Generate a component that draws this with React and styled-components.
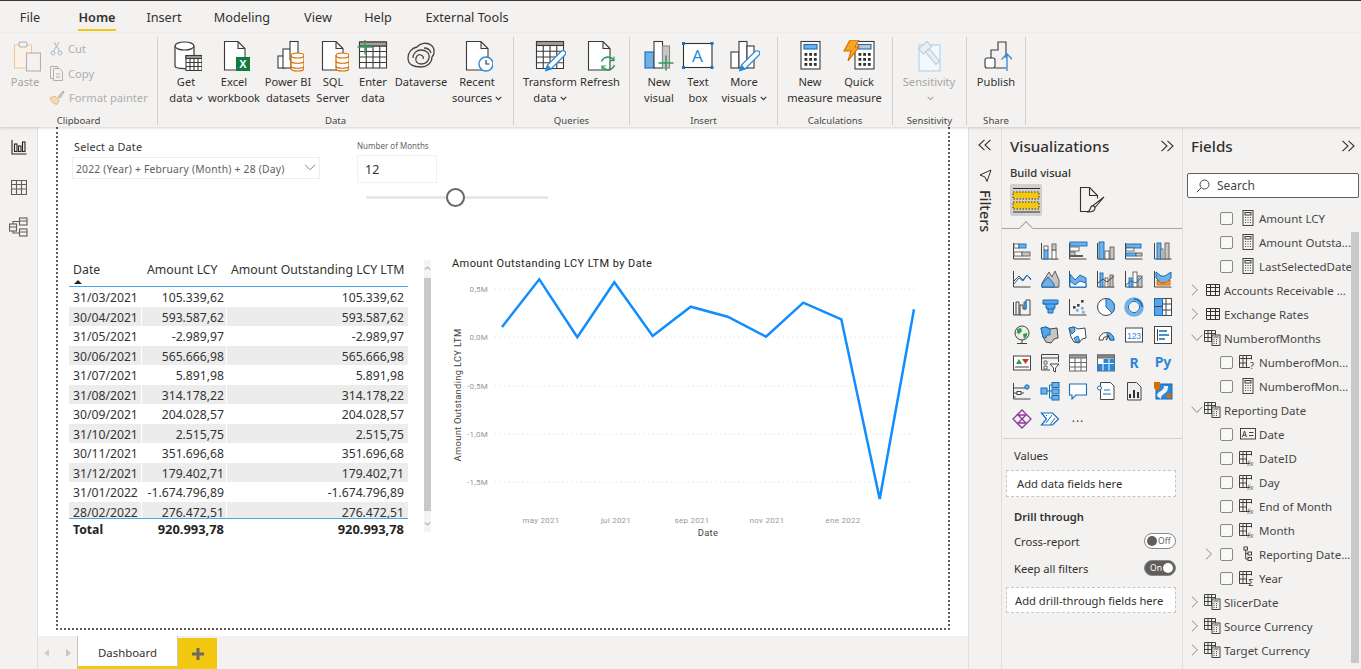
import React from 'react';
import styled, { createGlobalStyle } from 'styled-components';

const D = '#3b3a39', BF = '#71afe5', BS = '#106ebe', OR = '#d86c00', GR = '#2f9e44';
const UI = '"Noto Sans", "Open Sans", sans-serif';

const Global = createGlobalStyle`
  html, body { margin: 0; padding: 0; height: 100%; overflow: hidden; background: #f3f2f1; }
  body { font-family: ${UI}; color: #252423; }
  * { box-sizing: border-box; }
`;

const Window = styled.div`
  width: 1361px; height: 669px; display: flex; flex-direction: column;
  border-top: 1px solid #3a3a3a; background: #f3f2f1;
`;
const TabStrip = styled.nav`
  height: 32px; display: flex; align-items: flex-start; flex: none;
`;
const TopTab = styled.div`
  position: relative; flex: none; width: ${p => p.$w}px; margin-left: ${p => p.$m}px;
  height: 30px; line-height: 33px; font-size: 12.7px; white-space: nowrap; display: flex; justify-content: center;
  font-weight: ${p => (p.$active ? 600 : 400)}; color: #323130;
  border-bottom: ${p => (p.$active ? '2px solid #f2c811' : '2px solid transparent')};
`;
const Ribbon = styled.header`
  height: 94px; flex: none; display: flex; padding: 4px 0 2px; position: relative; z-index: 2;
  box-shadow: 0 1px 3px rgba(0,0,0,.18);
`;
const Group = styled.section`
  width: ${p => p.$w}px; flex: none; display: flex; flex-direction: column;
  border-right: 1px solid #d2d0ce;
`;
const GroupBody = styled.div`
  flex: 1; display: flex; padding: 3px 0 0 ${p => p.$pad ?? 8}px; min-height: 0;
`;
const GroupLabel = styled.div`
  height: 15px; line-height: 15px; text-align: center; font-size: 9.6px; color: #484644; flex: none;
  margin-bottom: -3px;
`;
const BigButton = styled.div`
  width: ${p => p.$w}px; flex: none; display: flex; flex-direction: column; align-items: center;
  color: ${p => (p.$off ? '#a8a6a4' : '#323130')};
  svg.main { display: block; flex: none; }
`;
const BigLabel = styled.div`
  margin-top: 2px; font-size: 11.1px; line-height: 16px; text-align: center; white-space: nowrap;
`;
const Caret = styled.svg`
  margin-left: 3px; vertical-align: 1px;
`;
const SmallStack = styled.div`
  margin-left: 7px; display: flex; flex-direction: column; gap: 7px;
`;
const SmallButton = styled.div`
  height: 17.5px; display: flex; align-items: center; gap: 4px; color: #b0aeac; font-size: 11.2px; white-space: nowrap;
`;

const Main = styled.main`
  flex: 1; display: flex; min-height: 0;
`;
const LeftRail = styled.aside`
  width: 38px; flex: none; border-right: 1px solid #e1dfdd; display: flex; flex-direction: column;
`;
const RailItem = styled.div`
  height: 40px; display: flex; align-items: center; justify-content: center;
`;
const CanvasColumn = styled.div`
  width: 930px; flex: none; display: flex; flex-direction: column;
`;
const Canvas = styled.div`
  flex: 1; background: #fff; padding: 0 18px 6px; min-height: 0; display: flex;
`;
const ReportPage = styled.div`
  flex: 1; border: 2px dotted #605e5c; border-top: 0; padding: 12px 0 0 11px; min-width: 0;
`;
const SlicerRow = styled.div`
  display: flex; height: 116px; padding-left: 3px; align-items: flex-start;
`;
const DateSlicer = styled.div`
  width: 248px; flex: none;
`;
const SlicerTitle = styled.div`
  font-size: 10.8px; line-height: 16px; padding-left: 2px; color: #333; letter-spacing: .2px;
`;
const DateBox = styled.div`
  margin-top: 2px; height: 22px; border: 1px solid #eee; padding: 0 3px 2px 3px; display: flex; align-items: center;
  justify-content: space-between; font-size: 10.3px; letter-spacing: .22px; color: #605e5c; white-space: nowrap;
`;
const DateText = styled.span`
  position: relative; top: 2px;
`;
const NumberSlicer = styled.div`
  margin-left: 37px; width: 192px; flex: none;
`;
const NumberTitle = styled.div`
  font-size: 8px; line-height: 12px; margin-top: 1px; color: #666;
`;
const NumberBox = styled.div`
  margin-top: 3px; width: 80px; height: 28px; border: 1px solid #f0f0f0; padding-left: 7px;
  font-size: 12.5px; line-height: 28px; color: #333;
`;
const Track = styled.div`
  position: relative; margin: 13px 0 0 9px; width: 182px; height: 3px; background: #e8e8e8;
`;
const Thumb = styled.div`
  position: absolute; left: 80px; top: -8px; width: 19px; height: 19px; border-radius: 50%;
  border: 2px solid #666; background: #fff;
`;
const VisualRow = styled.div`
  display: flex; align-items: flex-start;
`;
const Table = styled.div`
  width: 339px; margin-top: 6px; flex: none; font-size: 12.2px; color: #333;
`;
const HeaderRow = styled.div`
  display: grid; grid-template-columns: 73px 85px 181px; height: 26px; border-bottom: 1px solid #4aa6e8;
  font-size: 12.3px; line-height: 16px; padding-top: 1px; color: #333;
`;
const HeadCell = styled.div`
  padding-left: ${p => p.$pad}px; white-space: nowrap;
`;
const SortMark = styled.div`
  width: 0; height: 0; margin: 2px 0 0 1px; border: 4px solid transparent; border-top: 0;
  border-bottom: 4px solid #252423;
`;
const RowsClip = styled.div`
  height: 231px; overflow: hidden;
`;
const Row = styled.div`
  display: grid; grid-template-columns: 72px 1px 84px 1px 181px; height: 19.5px; line-height: 21px;
  ${p => p.$alt && 'background: #ececec;'}
`;
const Cell = styled.div`
  text-align: ${p => (p.$left ? 'left' : 'right')}; padding: 0 ${p => (p.$left ? 0 : (p.$pr ?? 3))}px 0 ${p => (p.$left ? 4 : 0)}px;
  white-space: nowrap; grid-column: ${p => p.$col};
`;
const TotalValue = styled(Cell)`
  font-size: 12.9px;
`;
const ColGap = styled.div`
  background: #fff; grid-column: ${p => p.$col}; grid-row: 1;
`;
const TotalRow = styled.div`
  display: grid; grid-template-columns: 73px 85px 181px; height: 21px; border-top: 1px solid #4aa6e8;
  line-height: 21px; font-weight: 700; color: #252423; font-size: 12.2px;
`;
const TableScroll = styled.div`
  margin: 5px 0 0 16px; width: 7px; height: 272px; background: #f3f3f3; flex: none; display: flex;
  flex-direction: column; align-items: center; justify-content: space-between; padding: 6px 0 6px; position: relative;
`;
const ScrollThumb = styled.div`
  position: absolute; left: 0; right: 0; top: 18px; height: 233px; background: #c8c8c8;
`;
const Chart = styled.svg`
  display: block; margin-left: 9px; flex: none;
`;
const ChartTitle = styled.text`
  font-family: Roboto, sans-serif; font-size: 11px; fill: #252423; letter-spacing: .42px;
`;
const Tick = styled.text`
  font-family: Roboto, sans-serif; font-size: 8px; fill: #999; letter-spacing: .25px;
`;
const AxisTitle = styled.text`
  font-family: Roboto, sans-serif; font-size: 9.4px; fill: #444; letter-spacing: .3px;
`;
const SheetBar = styled.footer`
  height: 33px; flex: none; display: flex; align-items: flex-end; background: #f3f2f1;
`;
const SheetArrows = styled.div`
  width: 39px; height: 33px; flex: none; display: flex; align-items: center; gap: 17px; padding: 1px 0 0 6px;
`;
const SheetTab = styled.div`
  width: 101px; height: 33px; background: #fff; border-left: 1px solid #c8c6c4; border-right: 1px solid #c8c6c4;
  border-bottom: 3px solid #f2c811; text-align: center; line-height: 34px; font-size: 11.4px; color: #323130; flex: none;
`;
const AddTab = styled.div`
  width: 39px; height: 31px; background: #f2c811; display: flex; align-items: center; justify-content: center; flex: none;
`;
const FilterRail = styled.aside`
  width: 34px; flex: none; border-left: 1px solid #e1dfdd; border-right: 1px solid #e1dfdd;
  display: flex; flex-direction: column; align-items: center; padding-top: 12px;
`;
const FilterGlyph = styled.div`
  margin-top: 18px; height: 13px; display: flex;
`;
const FilterWord = styled.div`
  writing-mode: vertical-rl; margin-top: 8px; font-size: 14.4px; line-height: 16px; font-weight: 500; color: #323130;
`;
const VizPane = styled.aside`
  width: 181px; flex: none; border-right: 1px solid #e1dfdd; display: flex; flex-direction: column;
`;
const PaneHead = styled.div`
  height: 38px; flex: none; display: flex; align-items: center; justify-content: space-between;
  padding: 0 ${p => p.$r}px 0 ${p => p.$l}px; font-size: 15.2px; font-weight: 500; color: #323130;
`;
const BuildLabel = styled.div`
  margin-left: 8px; height: 16px; line-height: 16px; font-size: 11.2px; font-weight: 500; color: #323130;
`;
const BuildRow = styled.div`
  position: relative; margin-top: 3px; height: 45px; border-bottom: 1px solid #a8a6a4; display: flex;
  align-items: flex-start; padding-left: 8px; flex: none;
  &::after {
    content: ''; position: absolute; left: 19px; bottom: -5px; width: 9px; height: 9px; background: #f3f2f1;
    border-left: 1px solid #a8a6a4; border-top: 1px solid #a8a6a4; transform: rotate(45deg);
  }
`;
const BuildTile = styled.div`
  width: 32px; height: 32px; background: #d2d0ce; border-radius: 2px; display: flex; align-items: center; justify-content: center;
`;
const FormatTile = styled.div`
  margin-left: 36px; width: 28px; height: 32px; display: flex; align-items: center; justify-content: center;
`;
const VizGrid = styled.div`
  margin: 8px 0 0 6px; display: grid; grid-template-columns: repeat(6, 28.1px); grid-auto-rows: 28px;
  height: 201px; flex: none;
`;
const VizCell = styled.div`
  display: flex; align-items: center; justify-content: center;
  svg { overflow: visible; }
`;
const PaneRule = styled.div`
  height: 1px; background: #d2d0ce; margin: 0 0 0 1px; flex: none;
`;
const PaneLabel = styled.div`
  margin: ${p => p.$t}px 0 0 12px; height: 16px; line-height: 16px; font-size: 11.2px; color: #323130;
  font-weight: ${p => (p.$bold ? 600 : 400)};
`;
const DropBox = styled.div`
  margin: ${p => p.$t}px 6px 0 4px; height: ${p => p.$h}px; background: #fff; border: 1px dashed #c8c6c4;
  padding-left: ${p => p.$p}px; display: flex; align-items: center; font-size: 11.2px; color: #323130; white-space: nowrap;
`;
const ToggleRow = styled.div`
  margin: ${p => p.$t}px 6px 0 12px; height: 18px; display: flex; align-items: center; justify-content: space-between;
  font-size: 11.2px; color: #323130;
`;
const Toggle = styled.div`
  width: 32px; height: 16px; border-radius: 8px; display: flex; align-items: center; gap: 1px;
  flex-direction: ${p => (p.$on ? 'row' : 'row-reverse')}; justify-content: flex-end;
  border: 1px solid #8a8886; background: ${p => (p.$on ? '#605e5c' : '#fff')};
  color: ${p => (p.$on ? '#fff' : '#605e5c')}; font-size: 8.6px; padding: 0 2px;
  &::after { content: ''; width: 10px; height: 10px; border-radius: 50%; background: ${p => (p.$on ? '#fff' : '#605e5c')}; flex: none; }
`;
const FieldsPane = styled.aside`
  flex: 1; min-width: 0; display: flex; flex-direction: column; position: relative;
`;
const SearchBox = styled.div`
  margin: 8px 2px 0 4px; height: 25px; background: #fff; border: 1px solid #605e5c; border-radius: 2px; flex: none;
  display: flex; align-items: center; padding-left: 8px; gap: 7px; font-size: 12px; color: #484644;
`;
const FieldList = styled.div`
  margin-top: 8px; display: flex; flex-direction: column;
`;
const FieldRow = styled.div`
  height: 24px; flex: none; display: flex; align-items: center; padding-left: ${p => (p.$child ? 22 : 8)}px;
  font-size: 11.5px; color: #484644; white-space: nowrap;
`;
const ChevSlot = styled.div`
  width: ${p => (p.$child ? 15 : 13)}px; flex: none; display: flex; align-items: center;
`;
const Check = styled.div`
  width: 13px; height: 13px; border: 1px solid #8a8886; border-radius: 2px; background: #f8f8f7; margin-right: 6px; flex: none;
`;
const IconSlot = styled.div`
  width: 17px; height: 16px; flex: none; margin-right: 3px; display: flex; align-items: center; justify-content: center;
`;
const FieldScroll = styled.div`
  position: absolute; left: 168px; width: 8px; top: 105px; height: 431px; background: #c8c8c8;
`;

/* ---------- ribbon drawings ---------- */
const Ic = ({ children, s = 32 }) => (
  <svg className="main" width={s} height={s} viewBox="0 0 32 32" fill="#fff" stroke={D} strokeWidth="1.1">{children}</svg>
);
const Cyl = ({ x, y, w, h, c = OR, fill = '#fff' }) => (
  <g stroke={c} fill={fill} strokeWidth="1.2">
    <path d={`M${x} ${y + 2.5}V${y + h - 2.5}c0 3.3 ${w} 3.3 ${w} 0V${y + 2.5}`} />
    <ellipse cx={x + w / 2} cy={y + 2.5} rx={w / 2} ry="2.5" />
    <path d={`M${x} ${y + h / 3 + 2}c0 3 ${w} 3 ${w} 0M${x} ${(y + h * 2 / 3) + 1}c0 3 ${w} 3 ${w} 0`} fill="none" />
  </g>
);
const Can = () => (
  <g stroke={D} fill="#fff" strokeWidth="1.2">
    <path d="M5 6V26c0 3.4 19 3.4 19 0V6" />
    <ellipse cx="14.5" cy="6" rx="9.5" ry="4" />
  </g>
);
const Doc = ({ x = 5, w = 21, y = 1, h = 29, c = D }) => (
  <path stroke={c} fill="#fff" d={`M${x + .5} ${y + .5}H${x + w - 7}L${x + w} ${y + 7.5}V${y + h}H${x + .5}ZM${x + w - 7} ${y + .5}V${y + 7.5}H${x + w}`} />
);
const GridT = ({ x, y, w, h, cols = 4, rows = 3, head }) => {
  const cw = w / cols, rh = (h - (head || 0)) / rows;
  let d = `M${x} ${y}h${w}v${h}h${-w}z`;
  for (let i = 1; i < cols; i++) d += `M${x + i * cw} ${y + (head || 0)}v${h - (head || 0)}`;
  for (let i = head ? 0 : 1; i < rows; i++) d += `M${x} ${y + (head || 0) + i * rh}h${w}`;
  return (<g><path d={d} fill="#fff" />{head ? <rect x={x} y={y} width={w} height={head} fill="#a19f9d" stroke={D} /> : null}</g>);
};
const Plus = ({ x, y, r = 7.5 }) => <path stroke="#2f9e5a" strokeWidth="1.5" fill="none" d={`M${x - r} ${y}h${r * 2}M${x} ${y - r}v${r * 2}`} />;
const Bars3 = () => (
  <g>
    <rect x="3" y="12" width="8" height="16" />
    <rect x="11" y="1.5" width="8" height="26.5" />
    <rect x="19" y="6" width="7" height="22" />
  </g>
);
const Calc = ({ x = 7, w = 19, screen = '#71afe5' }) => {
  const dots = [];
  for (let r = 0; r < 3; r++) for (let c = 0; c < 3; c++) dots.push(<rect key={`${r}${c}`} x={x + 3.5 + c * 4.7} y={13 + r * 5} width="2.8" height="2.8" fill="#323130" stroke="none" />);
  return (<g><rect x={x} y="1.5" width={w} height="27.5" /><rect x={x + 3} y="4.5" width={w - 6} height="4.5" fill={screen} stroke="#106ebe" />{dots}</g>);
};
const BluePen = () => (
  <g>
    <path d="M12 30.5l1.5-5.5L27 11.5c1-1 3-1 4 0s.8 2.5 0 3.5L17.5 28.5z" stroke="#2b88d8" strokeWidth="1.2" />
    <path d="M12 30.5l1.5-5 3.5 3.5z" fill="#2b88d8" stroke="#2b88d8" />
  </g>
);

const IGet = () => <Ic><Can /><GridT x={16} y={15.5} w={16} h={15} head={3} cols={4} rows={3} /></Ic>;
const IExcel = () => <Ic><Doc x={6} w={21} /><rect x="18" y="17" width="14" height="14" fill="#107c41" stroke="none" /><text x="25" y="28" textAnchor="middle" fontSize="11" fontWeight="700" fill="#fff" stroke="none" fontFamily="Liberation Sans">X</text></Ic>;
const IPbi = () => <Ic><rect x="6" y="16" width="7" height="12" /><rect x="11" y="9" width="8" height="19" /><rect x="18" y="1.5" width="8" height="18" /><Cyl x={19} y={13} w={13} h={18} /></Ic>;
const ISql = () => <Ic><Doc x={5} w={21} /><Cyl x={19} y={13} w={13} h={18} /></Ic>;
const IEnter = () => <Ic><GridT x={2.5} y={2} w={27} h={26} head={4} cols={4} rows={4} /><Plus x={8} y={7} /></Ic>;
const IDv = () => <Ic><g fill="none" stroke="#484644" strokeWidth="1.3"><path d="M3 18c0-6 4-10 9-11 3-4 10-5 14-2 4 3 4 9 1 12 0 6-5 10-11 10-7 0-13-2-13-9z" /><path d="M8 18c0-5 4-8 8-8 5 0 9 3 8 8-1 4-4 6-8 6s-6-3-5-6 3-4 5-3 3 2 2 4" /><path d="M19 8c3 0 6 2 7 5" /></g></Ic>;
const IRecent = () => <Ic><Doc x={5} w={22} /><circle cx="25" cy="24" r="7" stroke="#2b88d8" strokeWidth="1.4" /><path d="M25 20v4h3.5" fill="none" stroke="#323130" /></Ic>;
const ITransform = () => <Ic><GridT x={2.5} y={1.5} w={27} h={27} head={4} cols={4} rows={4} /><BluePen /></Ic>;
const IRefresh = () => <Ic><Doc x={4} w={22} /><g fill="none" stroke="#2f9e5a" strokeWidth="1.6"><path d="M17.5 21.5a7 7 0 0 1 12.5-1" /><path d="M30.5 25a7 7 0 0 1-12.5 1.5" /><path d="M30 16.5v4.2h-4.2M18 30v-4h4" strokeWidth="1.2" /></g></Ic>;
const INewVisual = () => <Ic><rect x="2" y="12" width="9" height="16" fill={BF} stroke={BS} /><rect x="11" y="1.5" width="8.5" height="26.5" /><rect x="19.5" y="6" width="7" height="22" fill="#c8c6c4" stroke="#8a8886" /><Plus x={23} y={23} /></Ic>;
const ITextBox = () => <Ic><rect x="1.5" y="3.5" width="28.5" height="24" stroke="#323130" /><text x="15.5" y="22" textAnchor="middle" fontSize="17" fontFamily="Noto Sans" fill="#2b88d8" stroke="none">A</text>{[[1.5, 3.5], [30, 3.5], [1.5, 27.5], [30, 27.5]].map(([a, b]) => <rect key={`${a}${b}`} x={a - 1.5} y={b - 1.5} width="3" height="3" fill="#0f78d4" stroke="none" />)}</Ic>;
const IMore = () => <Ic><Bars3 /><BluePen /></Ic>;
const IMeasure = () => <Ic><Calc /></Ic>;
const IQuick = () => <Ic><Calc x={12} w={19} screen="#c8c6c4" /><path d="M7 0h9l-4 7h4L5 21l3-10H1z" fill="#f7a51d" stroke={OR} /></Ic>;
const ISens = () => <Ic><g stroke="#a9d3ee"><rect x="6" y="5" width="21" height="26" fill="#f3f8fb" /></g><g transform="rotate(-40 18 14)" stroke="#b7cfe0" fill="#e8eef2"><rect x="12" y="2" width="11" height="7" /><rect x="15" y="9" width="5" height="16" /></g></Ic>;
const IPublish = () => <Ic><rect x="5" y="18" width="10" height="10" rx="2" /><path d="M11 18v-8h7V2h8v16M15 28h11" fill="none" /><path d="M27 31V14M21.5 19.5L27 14l5.5 5.5" fill="none" stroke="#2b88d8" strokeWidth="1.3" /></Ic>;
const IPaste = () => <Ic><rect x="5.5" y="5" width="17" height="23" fill="#fbf3ea" stroke="#f0c8a0" /><rect x="10" y="2" width="8" height="5" rx="1.5" fill="#f3f2f1" stroke="#b3b0ad" /><rect x="17.5" y="13" width="14" height="18" fill="#f3f2f1" stroke="#b3b0ad" /></Ic>;

const SCut = () => <svg width="15" height="15" viewBox="0 0 15 15" fill="none" stroke="#9db9d2"><circle cx="4" cy="12" r="2" /><circle cx="11" cy="12" r="2" /><path d="M4.5 10L10 1M10.5 10L5 1" stroke="#b3b0ad" /></svg>;
const SCopy = () => <svg width="15" height="16" viewBox="0 0 15 16" fill="#f3f2f1" stroke="#b3b0ad"><path d="M1.5 1.5h7v12h-7z" /><path d="M4.5 3.5h6l3 3v9h-9z" /><path d="M7 9h4M7 12h4" /></svg>;
const SBrush = () => <svg width="16" height="15" viewBox="0 0 16 15" fill="#f7d7b5" stroke="#eab98a"><path d="M1 8l5-2 4 4-2 4.5C5 14 2 12 1 8z" /><path d="M9 7l5-6 1 1-4 6z" fill="#d2d0ce" stroke="#b3b0ad" /></svg>;

const Down = ({ c = '#323130' }) => <Caret width="7" height="5" viewBox="0 0 7 5" fill="none" stroke={c} strokeWidth="1.1"><path d="M.7.8l2.8 2.8L6.3.8" /></Caret>;

/* ---------- rail and pane drawings ---------- */
const RailReport = () => <svg width="16" height="16" viewBox="0 0 16 16" fill="none" stroke="#252423" strokeWidth="1.1"><path d="M1 1v14h14.5" /><rect x="3.5" y="5" width="2.5" height="7.5" /><rect x="7.5" y="7" width="2.5" height="5.5" /><rect x="11.5" y="3" width="2.5" height="9.5" /></svg>;
const RailData = () => <svg width="16" height="16" viewBox="0 0 16 16" fill="none" stroke="#605e5c" strokeWidth="1.1"><path d="M.5 1.5h15v14H.5zM.5 5.5h15M.5 10h15M5.5 1.5v14M10.5 1.5v14" /></svg>;
const RailModel = () => <svg width="19" height="20" viewBox="0 0 19 20" fill="none" stroke="#605e5c" strokeWidth="1.1"><rect x=".5" y="7" width="7" height="7" /><rect x="10.5" y="1" width="7.5" height="7" /><rect x="10.5" y="12" width="7.5" height="7" /><path d="M.5 10h7M10.5 4h7.5M10.5 15h7.5M4 7V4.5h6.5M4 14v2h6.5" /></svg>;
const Dbl = ({ left }) => <svg width="14" height="12" viewBox="0 0 14 12" fill="none" stroke="#323130" strokeWidth="1.1"><path d={left ? 'M6.5 .8L1 6l5.5 5.2M12.5 .8L7 6l5.5 5.2' : 'M1.5 .8L7 6l-5.5 5.2M7.5 .8L13 6l-5.5 5.2'} /></svg>;
const FilterSend = () => <svg width="13" height="13" viewBox="0 0 13 13" fill="none" stroke="#323130"><path d="M12 1L1 6l5 2 2 4.5z" /></svg>;
const SliceIcon = () => <svg width="28" height="26" viewBox="0 0 28 26" fill="none" stroke="#323130"><path d="M1 1.5h27M1 25h27" /><rect x="1" y="5" width="26" height="7" fill="#f2c811" stroke="#323130" strokeDasharray="1.5 1.5" /><rect x="1" y="15" width="26" height="7" fill="#f2c811" stroke="#323130" strokeDasharray="1.5 1.5" /></svg>;
const FormatIcon = () => <svg width="26" height="26" viewBox="0 0 26 26" fill="none" stroke="#323130" strokeWidth="1.1"><path d="M9 24.5H1.5V.5h9l8 8v3M10.5.5v8h8" /><path d="M25 10L14 18.5l2 2z" fill="#f3f2f1" /><path d="M9 25c3 0 7-.5 7-4 0-2-3-3-4-1-1 1-.5 3-3 5z" fill="#f3f2f1" /></svg>;

const Ax = () => <path d="M1.5 2v16h17" fill="none" stroke="#444" />;
const R = ({ x, y, w, h, f = BF, s = BS }) => <rect x={x} y={y} width={w} height={h} fill={f} stroke={s} strokeWidth=".9" />;
const W = '#fff', K = '#605e5c', GF = '#c8c6c4';
const Dots = ({ pts, f }) => pts.map(([a, b]) => <rect key={`${a}-${b}`} x={a} y={b} width="2.6" height="2.6" fill={f} />);
const VIZ = [
  <><Ax /><R x={2} y={3} w={5} h={4} f={W} s={K} /><R x={7} y={3} w={7} h={4} /><R x={2} y={11} w={8} h={4} f={W} s={K} /><R x={10} y={11} w={8} h={4} f={GF} s={K} /></>,
  <><Ax /><R x={4} y={9} w={4} h={9} /><R x={4} y={5} w={4} h={4} f={W} s={K} /><R x={12} y={9} w={4} h={9} f={W} s={K} /><R x={12} y={3} w={4} h={6} f={GF} s={K} /></>,
  <><Ax /><R x={2} y={1} w={17} h={4} /><R x={2} y={6} w={9} h={4} f={W} s={K} /><R x={2} y={11} w={5} h={4} f={GF} s={K} /><path d="M2 15h13" stroke={K} strokeWidth="2" /></>,
  <><Ax /><R x={3} y={1} w={5} h={17} /><R x={9} y={10} w={4} h={8} f={W} s={K} /><R x={14} y={6} w={4} h={12} f={GF} s={K} /></>,
  <><Ax /><R x={2} y={3} w={15} h={4} /><R x={2} y={7} w={8} h={3} f={W} s={K} /><R x={2} y={12} w={10} h={3} /><R x={12} y={12} w={6} h={3} f={GF} s={K} /></>,
  <><Ax /><R x={4} y={2} w={4} h={16} /><R x={8} y={8} w={2} h={10} f={W} s={K} /><R x={12} y={2} w={4} h={16} f={GF} s={K} /></>,
  <><Ax /><path d="M2 12l5-5 4 4 4-5 4 4" fill="none" stroke="#444" /><path d="M2 15l5-6 4 3 4-6 4 5" fill="none" stroke={BS} /></>,
  <><path d="M1.5 18h17" stroke="#444" /><path d="M2 14L9 3l3 5 3-6 4 9v7H2z" fill={GF} stroke={K} /><path d="M2 18v-3l6-7 6 7v3z" fill={BF} stroke={BS} /></>,
  <><path d="M1.5 2v16h17" stroke="#444" fill="none" /><path d="M2 5l5 6 5-5 6 3v9H2z" fill={BF} stroke={BS} /><path d="M2 18v-6l5 4 5-4 6 2v4z" fill={W} stroke={BS} /></>,
  <><Ax /><R x={4} y={4} w={3} h={14} /><R x={9} y={9} w={3} h={9} f={W} s={K} /><R x={14} y={6} w={3} h={12} f={GF} s={K} /><path d="M2 14l5-4 4 3 7-6" stroke="#444" fill="none" /></>,
  <><Ax /><R x={5} y={9} w={3} h={9} /><R x={9} y={3} w={4} h={15} f={W} s={K} /><R x={14} y={7} w={4} h={11} f={GF} s={K} /><path d="M2 16l5-4 5 2 6-6" stroke={BS} fill="none" /></>,
  <><path d="M1.5 2v16h17" stroke="#444" fill="none" /><path d="M3 3l5 4 4 0 6-4v6l-5 5-5 0-5-5z" fill={BF} stroke={BS} /><path d="M4 11l4 3h4l5-3v5H4z" fill="#ed9b3c" stroke={OR} /></>,
  <><path d="M1.5 18V5M1.5 18h17" stroke="#444" /><path d="M4 18V5h3v13M8 18V8h3v4h3V3h4v15" fill="none" stroke="#444" /><path d="M12 12V5h2v7z" fill={BF} stroke={BS} /></>,
  <><path d="M3 3h15v4h-3v4h-2v5H8v-5H6V7H3z" fill="#5ba5e6" stroke={BS} /><path d="M3 7h15M6 12h9" stroke={BS} /></>,
  <><Ax /><Dots pts={[[13, 3], [5, 9], [9, 7]]} f="#444" /><Dots pts={[[8, 12], [13, 10], [14, 14]]} f={BF} /></>,
  <><circle cx="10" cy="10" r="8.5" fill={W} stroke="#444" /><path d="M10 1.5a8.5 8.5 0 0 1 6 14.5l-6-6z" fill={BF} stroke={BS} /></>,
  <><circle cx="10" cy="10" r="8" fill="none" stroke={BF} strokeWidth="3.6" /><path d="M10 2a8 8 0 0 1 8 8" fill="none" stroke={BS} strokeWidth="1.6" /><circle cx="10" cy="10" r="5.6" fill="#f3f2f1" stroke={BS} /></>,
  <><rect x="1.5" y="1.5" width="17" height="17" fill={W} stroke="#444" /><rect x="1.5" y="1.5" width="8" height="17" fill="#5ba5e6" stroke={BS} /><path d="M1.5 9.5h8M9.5 7h9M13 1.5V18.5M9.5 13h9" stroke="#444" fill="none" /></>,
  <><circle cx="10" cy="8" r="7" fill="#e8f0e8" stroke="#444" /><path d="M5 4l4-1 1 3-3 3-2-1zM11 9l4-1 0 3-3 3z" fill={GR} stroke="none" /><path d="M10 15v3M5 18.5h10" stroke="#444" /></>,
  <><path d="M1 3l5-1 4 2 7-1 1 10-4 1-3 4-5-1-3-5z" fill={GF} stroke="#444" /><path d="M1 3l5-1 4 2v6H7l-1 3-3-1z" fill="#5ba5e6" stroke={BS} /></>,
  <><path d="M1 3l5-1 4 2 7-1 1 10-4 1-3 4-5-1-3-5z" fill={W} stroke="#444" /><path d="M1 3l5-1 1 4-3 3zM6 13l4-2 2 6-4 0z" fill={BF} stroke={BS} /></>,
  <><path d="M3 15a7.5 7.5 0 0 1 15 0h-4a3.5 3.5 0 0 0-7 0z" fill={W} stroke="#444" /><path d="M11 7.5A7.5 7.5 0 0 1 18 15h-4a3.5 3.5 0 0 0-3-4z" fill={BF} stroke={BS} /><path d="M10 15l3-5" stroke="#444" strokeWidth="1.4" /></>,
  <><rect x="1.5" y="3" width="17" height="14" fill={W} stroke="#444" /><text x="10" y="13.5" textAnchor="middle" fontSize="8.5" fill="#2b88d8" stroke="none" fontFamily="Liberation Sans">123</text></>,
  <><rect x="1.5" y="1.5" width="17" height="17" fill={W} stroke="#444" /><path d="M4.5 4v12" stroke="#444" /><path d="M6 6h8M6 10h10M6 14h6" stroke={BS} strokeWidth="1.5" /></>,
  <><rect x="1.5" y="3" width="17" height="14" fill={W} stroke="#444" /><path d="M4 11l3-5 3 5z" fill={GR} /><path d="M10 6h7l-3.5 5z" fill="#d13438" /><path d="M3 14h14" stroke="#444" /></>,
  <><path d="M10 17H1.5V1.5h17V9M1.5 5h17" fill="none" stroke="#444" /><path d="M4 8h3v3H4zM4 13h3v3H4z" fill="none" stroke="#666" /><path d="M10 11h9l-3.5 4v4l-2-1v-3z" fill={W} stroke="#444" /></>,
  <><rect x="1.5" y="2" width="17" height="16" fill={W} stroke="#666" /><rect x="1.5" y="2" width="17" height="3" fill="#a19f9d" stroke="#666" /><path d="M1.5 9.5h17M1.5 14h17M7 5v13M13 5v13" stroke="#666" fill="none" /></>,
  <><rect x="1.5" y="2" width="17" height="16" fill={W} stroke="#666" /><rect x="1.5" y="2" width="17" height="3" fill="#8a8886" stroke="#666" /><path d="M7.5 6h5v4h-5zM13.5 6h5v4h-5zM1.5 11h5v7h-5zM7.5 11h5v7h-5zM13.5 11h5v7h-5z" fill="#2b88d8" /></>,
  <text x="10" y="15" textAnchor="middle" fontSize="14" fontWeight="700" fill="#2b88d8" stroke="none" fontFamily="Noto Sans">R</text>,
  <text x="10" y="14" textAnchor="middle" fontSize="14" fontWeight="700" fill="#2b88d8" stroke="none" fontFamily="Noto Sans">Py</text>,
  <><path d="M1.5 2v16h17" fill="none" stroke="#444" /><path d="M1.5 7h12M1.5 12h4M9 12h3M1.5 16h2" stroke="#444" /><circle cx="15" cy="6" r="2.2" fill={BF} stroke={BS} /><rect x="5" y="10.5" width="4" height="3" fill={W} stroke="#444" /></>,
  <><rect x="1" y="7" width="6" height="6" fill={BF} stroke={BS} /><rect x="12" y="1.5" width="7" height="5" fill={BF} stroke={BS} /><rect x="12" y="8" width="7" height="5" fill={BF} stroke={BS} /><rect x="12" y="14.5" width="7" height="4.5" fill={BF} stroke={BS} /><path d="M7 10h5M9.5 4v13M9.5 4H12M9.5 17H12" stroke={BS} fill="none" /></>,
  <path d="M1.5 3h17v11H8l-4 4v-4H1.5z" fill={W} stroke={BS} strokeWidth="1.1" />,
  <><path d="M4.5 1.5h10l3.5 3.5v13.5H4.5z" fill={W} stroke="#444" /><circle cx="3.5" cy="7" r="2" fill={W} stroke={BS} /><path d="M8 9h6M7 13h8" stroke={BS} /></>,
  <><path d="M3.5 1.5h9l4.5 4.5v13H3.5z" fill="#eee" stroke="#444" /><path d="M6 17v-4M10 17V9M14 17v-6" stroke="#323130" strokeWidth="2" /></>,
  <><rect x="3" y="3" width="16" height="15" fill="#2b88d8" stroke={BS} /><path d="M8 18c0-4 2-4 4-6 2-1 3-3 3-7h-4c0 3-2 4-3 5-2 1-4 2-4 5" fill="#f3f2f1" /><path d="M1 1h6v6l-3 3-3-3z" fill={OR} /><circle cx="16" cy="15" r="2.4" fill={OR} /></>,
  <><path d="M10 1l9 9-9 9-9-9z" fill="none" stroke="#8a3a9a" strokeWidth="1.3" /><path d="M6 6h8l-4 4zM6 14h8l-4-4z" fill="none" stroke="#8a3a9a" strokeWidth="1.3" /></>,
  <><path d="M1.5 4h11l6 6-6 6h-11l5-6z" fill={W} stroke={BS} strokeWidth="1.2" /><path d="M7 6l-1 1M12 6l-6 8M15 9l-5 7" stroke={BS} /></>,
  <text x="10" y="13" textAnchor="middle" fontSize="12" fill="#484644" stroke="none" fontFamily="Noto Sans" letterSpacing="1">...</text>,
];

const Chev = ({ open }) => <svg width={open ? 12 : 8} height={open ? 8 : 12} viewBox={open ? '0 0 12 8' : '0 0 8 12'} fill="none" stroke="#8a8886"><path d={open ? 'M.7.8L6 6.5 11.3.8' : 'M1 .8L6.5 6 1 11.2'} /></svg>;
const TblI = () => <svg width="14" height="12" viewBox="0 0 14 12" fill="none" stroke="#323130"><path d="M.5.5h13v11H.5zM.5 3.5h13M.5 7.5h13M4.5.5v11M9.5.5v11" /></svg>;
const FI = ({ children }) => <svg width="16" height="16" viewBox="0 0 16 16" fill="none" stroke="#323130" strokeWidth=".9">{children}</svg>;
const CalcTbl = () => <svg width="17" height="16" viewBox="0 0 17 16" fill="none" stroke="#323130" strokeWidth=".9"><path d="M.5.5h11v11H.5zM.5 3.5h11M4 .5v11M7.5.5v11M.5 7.5h11" /><rect x="8" y="5" width="8" height="10.5" fill="#f3f2f1" /><path d="M9.5 7h5" /><path d="M9.5 9.5h1M12 9.5h1M9.5 11.5h1M12 11.5h1M9.5 13.5h1M12 13.5h1" /></svg>;
const CalcI = () => <FI><rect x="3" y=".5" width="10" height="15" /><rect x="5" y="2.5" width="6" height="2.5" /><path d="M5 7.5h1M7.5 7.5h1M10 7.5h1M5 10h1M7.5 10h1M10 10h1M5 12.5h1M7.5 12.5h1M10 12.5h1" /></FI>;
const TblSm = ({ tag }) => <svg width="17" height="16" viewBox="0 0 17 16" fill="none" stroke="#323130" strokeWidth=".9"><path d="M11 13.5H.5v-12h12v4M.5 4.5h12M4 1.5v12M7.5 1.5v12M.5 9h7" />{tag}</svg>;
const FxT = <text x="8" y="15.5" fontSize="9" fontStyle="italic" fill="#605e5c" stroke="none" fontFamily="Liberation Serif">fx</text>;
const QT = <text x="11" y="15" fontSize="9" fill="#323130" stroke="none" fontFamily="Noto Sans">?</text>;
const ST = <text x="9.5" y="16" fontSize="8.5" fill="#323130" stroke="none" fontFamily="Noto Sans">Σ</text>;
const IdI = () => <FI><rect x=".5" y="2.5" width="15" height="10.5" /><path d="M2.5 11l2-6 2 6M3.2 9.3h2.6M9 6.5h4.5M9 9.5h4.5" /></FI>;
const HierI = () => <FI><rect x="4" y="1" width="3.5" height="3" /><rect x="8" y="6" width="3.5" height="3" /><rect x="8" y="11.5" width="3.5" height="3" /><path d="M5.7 4v9H8M5.7 7.5H8" /></FI>;

const ICONS = { tbl: <TblI />, ct: <CalcTbl />, calc: <CalcI />, fx: <TblSm tag={FxT} />, q: <TblSm tag={QT} />, sum: <TblSm tag={ST} />, id: <IdI />, hier: <HierI /> };
const FIELDS = [
  ['Amount LCY', 'calc', 1], ['Amount Outsta...', 'calc', 1], ['LastSelectedDate', 'calc', 1],
  ['Accounts Receivable ...', 'tbl', 0, 'c'], ['Exchange Rates', 'tbl', 0, 'c'], ['NumberofMonths', 'ct', 0, 'o'],
  ['NumberofMon...', 'q', 1], ['NumberofMon...', 'calc', 1], ['Reporting Date', 'ct', 0, 'o'],
  ['Date', 'id', 1], ['DateID', 'fx', 1], ['Day', 'fx', 1], ['End of Month', 'fx', 1], ['Month', 'fx', 1],
  ['Reporting Date...', 'hier', 1, 'c'], ['Year', 'sum', 1],
  ['SlicerDate', 'ct', 0, 'c'], ['Source Currency', 'ct', 0, 'c'], ['Target Currency', 'ct', 0, 'c'],
];
const ROWS = [
  ['31/03/2021', '105.339,62'], ['30/04/2021', '593.587,62'], ['31/05/2021', '-2.989,97'], ['30/06/2021', '565.666,98'],
  ['31/07/2021', '5.891,98'], ['31/08/2021', '314.178,22'], ['30/09/2021', '204.028,57'], ['31/10/2021', '2.515,75'],
  ['30/11/2021', '351.696,68'], ['31/12/2021', '179.402,71'], ['31/01/2022', '-1.674.796,89'], ['28/02/2022', '276.472,51'],
];
const LINE = '502,327 539.3,279.3 577.3,337.3 614.3,282.3 652.7,336 690.7,306.7 727.7,316.7 766,336.7 803.3,302.7 841.3,319.3 879.7,499 914,309.3';
const YT = [[289, '0,5M'], [337, '0,0M'], [386, '-0,5M'], [434, '-1,0M'], [482, '-1,5M']];
const XT = [[541, 'may 2021'], [616, 'jul 2021'], [692, 'sep 2021'], [767, 'nov 2021'], [843, 'ene 2022']];

const Big = ({ w, icon, lines, caret, off }) => (
  <BigButton $w={w} $off={off}>
    {icon}
    <BigLabel>
      {lines.map((l, i) => (
        <div key={i}>{l}{caret && i === lines.length - 1 ? <Down c={off ? '#a8a6a4' : '#323130'} /> : null}</div>
      ))}
    </BigLabel>
  </BigButton>
);

export default function App() {
  return (
    <Window>
      <Global />
      <TabStrip>
        <TopTab $w={22} $m={19}>File</TopTab>
        <TopTab $active $w={38} $m={37}>Home</TopTab>
        <TopTab $w={36} $m={30}>Insert</TopTab>
        <TopTab $w={58} $m={31}>Modeling</TopTab>
        <TopTab $w={30} $m={32}>View</TopTab>
        <TopTab $w={28} $m={31}>Help</TopTab>
        <TopTab $w={84} $m={33}>External Tools</TopTab>
      </TabStrip>
      <Ribbon>
        <Group $w={158}>
          <GroupBody>
            <Big w={34} icon={<IPaste />} lines={['Paste']} off />
            <SmallStack>
              <SmallButton><SCut />Cut</SmallButton>
              <SmallButton><SCopy />Copy</SmallButton>
              <SmallButton><SBrush />Format painter</SmallButton>
            </SmallStack>
          </GroupBody>
          <GroupLabel>Clipboard</GroupLabel>
        </Group>
        <Group $w={356}>
          <GroupBody>
            <Big w={40} icon={<IGet />} lines={['Get', 'data']} caret />
            <Big w={56} icon={<IExcel />} lines={['Excel', 'workbook']} />
            <Big w={52} icon={<IPbi />} lines={['Power BI', 'datasets']} />
            <Big w={38} icon={<ISql />} lines={['SQL', 'Server']} />
            <Big w={42} icon={<IEnter />} lines={['Enter', 'data']} />
            <Big w={54} icon={<IDv />} lines={['Dataverse']} />
            <Big w={58} icon={<IRecent />} lines={['Recent', 'sources']} caret />
          </GroupBody>
          <GroupLabel>Data</GroupLabel>
        </Group>
        <Group $w={116}>
          <GroupBody>
            <Big w={56} icon={<ITransform />} lines={['Transform', 'data']} caret />
            <Big w={44} icon={<IRefresh />} lines={['Refresh']} />
          </GroupBody>
          <GroupLabel>Queries</GroupLabel>
        </Group>
        <Group $w={148}>
          <GroupBody>
            <Big w={42} icon={<INewVisual />} lines={['New', 'visual']} />
            <Big w={36} icon={<ITextBox />} lines={['Text', 'box']} />
            <Big w={56} icon={<IMore />} lines={['More', 'visuals']} caret />
          </GroupBody>
          <GroupLabel>Insert</GroupLabel>
        </Group>
        <Group $w={115}>
          <GroupBody>
            <Big w={48} icon={<IMeasure />} lines={['New', 'measure']} />
            <Big w={50} icon={<IQuick />} lines={['Quick', 'measure']} />
          </GroupBody>
          <GroupLabel>Calculations</GroupLabel>
        </Group>
        <Group $w={74}>
          <GroupBody $pad={4}>
            <Big w={64} icon={<ISens />} lines={['Sensitivity', '']} caret off />
          </GroupBody>
          <GroupLabel>Sensitivity</GroupLabel>
        </Group>
        <Group $w={59}>
          <GroupBody $pad={4}>
            <Big w={50} icon={<IPublish />} lines={['Publish']} />
          </GroupBody>
          <GroupLabel>Share</GroupLabel>
        </Group>
      </Ribbon>
      <Main>
        <LeftRail>
          <RailItem><RailReport /></RailItem>
          <RailItem><RailData /></RailItem>
          <RailItem><RailModel /></RailItem>
        </LeftRail>
        <CanvasColumn>
          <Canvas>
            <ReportPage>
              <SlicerRow>
                <DateSlicer>
                  <SlicerTitle>Select a Date</SlicerTitle>
                  <DateBox>
                    <DateText>2022 (Year) + February (Month) + 28 (Day)</DateText>
                    <svg width="12" height="7" viewBox="0 0 12 7" fill="none" stroke="#8a8886"><path d="M1 .8l5 5 5-5" /></svg>
                  </DateBox>
                </DateSlicer>
                <NumberSlicer>
                  <NumberTitle>Number of Months</NumberTitle>
                  <NumberBox>12</NumberBox>
                  <Track><Thumb /></Track>
                </NumberSlicer>
              </SlicerRow>
              <VisualRow>
                <Table>
                  <HeaderRow>
                    <HeadCell $pad={4}>Date<SortMark /></HeadCell>
                    <HeadCell $pad={5}>Amount LCY</HeadCell>
                    <HeadCell $pad={4}>Amount Outstanding LCY LTM</HeadCell>
                  </HeaderRow>
                  <RowsClip>
                    {ROWS.map(([d, v], i) => (
                      <Row key={d} $alt={i % 2 === 1}>
                        <Cell $left $col={1}>{d}</Cell>
                        <ColGap $col={2} />
                        <Cell $col={3} $pr={2}>{v}</Cell>
                        <ColGap $col={4} />
                        <Cell $col={5} $pr={4}>{v}</Cell>
                      </Row>
                    ))}
                  </RowsClip>
                  <TotalRow>
                    <Cell $left $col={1}>Total</Cell>
                    <TotalValue $col={2} $pr={3}>920.993,78</TotalValue>
                    <TotalValue $col={3} $pr={4}>920.993,78</TotalValue>
                  </TotalRow>
                </Table>
                <TableScroll>
                  <ScrollThumb />
                  <svg width="7" height="4" viewBox="0 0 7 4" fill="none" stroke="#8a8886"><path d="M1 3.5L3.5 1 6 3.5" /></svg>
                  <svg width="7" height="4" viewBox="0 0 7 4" fill="none" stroke="#8a8886"><path d="M1 .5L3.5 3 6 .5" /></svg>
                </TableScroll>
                <Chart width="490" height="290" viewBox="440 255 490 290">
                  <ChartTitle x="452" y="267">Amount Outstanding LCY LTM by Date</ChartTitle>
                  {YT.map(([y, t]) => (
                    <g key={t}>
                      <path d={`M495 ${y}H918`} stroke="#d9d9d9" strokeDasharray="1 3.5" />
                      <Tick x="488" y={y + 3} textAnchor="end">{t}</Tick>
                    </g>
                  ))}
                  {XT.map(([x, t]) => <Tick key={t} x={x} y={523} textAnchor="middle">{t}</Tick>)}
                  <AxisTitle x="708" y="536" textAnchor="middle">Date</AxisTitle>
                  <AxisTitle x="0" y="0" textAnchor="middle" transform="translate(461 395) rotate(-90)">Amount Outstanding LCY LTM</AxisTitle>
                  <polyline points={LINE} fill="none" stroke="#118dff" strokeWidth="2.5" strokeLinejoin="miter" />
                </Chart>
              </VisualRow>
            </ReportPage>
          </Canvas>
          <SheetBar>
            <SheetArrows>
              <svg width="5" height="8" viewBox="0 0 5 8" fill="#d2d0ce"><path d="M5 0v8L0 4z" /></svg>
              <svg width="5" height="8" viewBox="0 0 5 8" fill="#c8c6c4"><path d="M0 0v8l5-4z" /></svg>
            </SheetArrows>
            <SheetTab>Dashboard</SheetTab>
            <AddTab>
              <svg width="12" height="12" viewBox="0 0 12 12" fill="#6e6a5a"><path d="M4.5 0h3v4.5H12v3H7.5V12h-3V7.5H0v-3h4.5z" /></svg>
            </AddTab>
          </SheetBar>
        </CanvasColumn>
        <FilterRail>
          <Dbl left />
          <FilterGlyph><FilterSend /></FilterGlyph>
          <FilterWord>Filters</FilterWord>
        </FilterRail>
        <VizPane>
          <PaneHead $l={8} $r={8}>Visualizations<Dbl /></PaneHead>
          <BuildLabel>Build visual</BuildLabel>
          <BuildRow>
            <BuildTile><SliceIcon /></BuildTile>
            <FormatTile><FormatIcon /></FormatTile>
          </BuildRow>
          <VizGrid>
            {VIZ.map((v, i) => (
              <VizCell key={i}>
                <svg width="20" height="20" viewBox="0 0 20 20" fill="none">{v}</svg>
              </VizCell>
            ))}
          </VizGrid>
          <PaneRule />
          <PaneLabel $t={9}>Values</PaneLabel>
          <DropBox $t={6} $h={27} $p={10}>Add data fields here</DropBox>
          <PaneLabel $bold $t={12}>Drill through</PaneLabel>
          <ToggleRow $t={7}>Cross-report<Toggle>Off</Toggle></ToggleRow>
          <ToggleRow $t={9}>Keep all filters<Toggle $on>On</Toggle></ToggleRow>
          <DropBox $t={10} $h={26} $p={8}>Add drill-through fields here</DropBox>
        </VizPane>
        <FieldsPane>
          <PaneHead $l={8} $r={6}>Fields<Dbl /></PaneHead>
          <SearchBox>
            <svg width="14" height="14" viewBox="0 0 14 14" fill="none" stroke="#484644"><circle cx="8.5" cy="5.5" r="4.5" /><path d="M5.3 8.7L.8 13.2" /></svg>
            Search
          </SearchBox>
          <FieldList>
            {FIELDS.map(([name, icon, child, chev], i) => (
              <FieldRow key={i} $child={child}>
                <ChevSlot $child={child}>{chev ? <Chev open={chev === 'o'} /> : null}</ChevSlot>
                {child ? <Check /> : null}
                <IconSlot>{ICONS[icon]}</IconSlot>
                {name}
              </FieldRow>
            ))}
          </FieldList>
          <FieldScroll />
        </FieldsPane>
      </Main>
    </Window>
  );
}
